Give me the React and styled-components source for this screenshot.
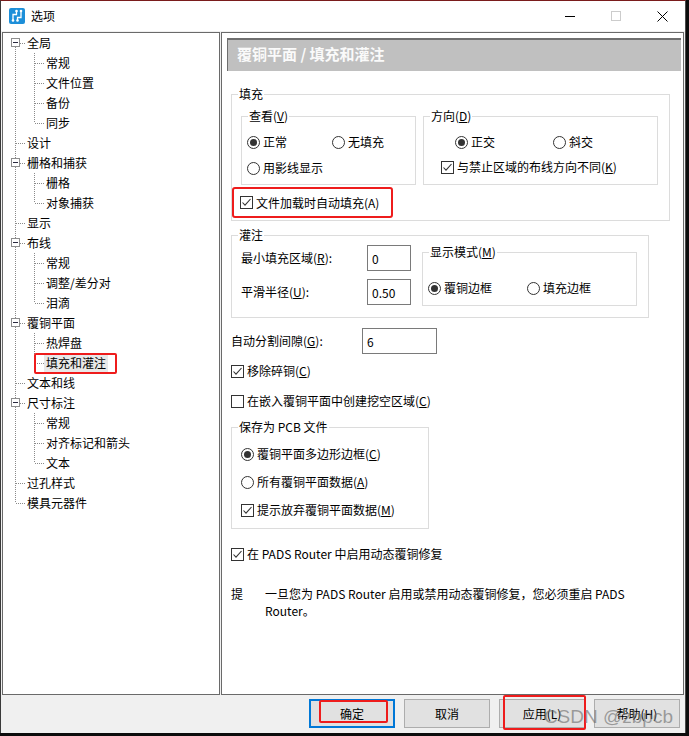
import React from "react";
import styled, { createGlobalStyle, css } from "styled-components";

const GlobalStyle = createGlobalStyle`
  body {
    margin: 0;
    background: #0c0c0c;
    font-family: "Noto Sans CJK SC", "Noto Sans", sans-serif;
  }
`;

const Screen = styled.div`
  display: flex;
  width: 689px;
  height: 736px;
  background: #0c0c0c;
  overflow: hidden;
`;

const Window = styled.div`
  position: relative;
  width: 686px;
  height: 733px;
  box-sizing: border-box;
  display: flex;
  flex-direction: column;
  background: #f0f0f0;
  border-top: 1px solid #7a1c1c;
  border-left: 1px solid #3a3a3a;
  border-right: 1px solid #4a4a4a;
  color: #000;
  font-size: 12px;
`;

const TitleBar = styled.div`
  height: 30px;
  flex: none;
  display: flex;
  align-items: center;
  background: #fff;
`;

const Title = styled.span`
  margin-left: 6px;
  font-size: 12px;
  line-height: 16px;
`;

const WinButtons = styled.div`
  margin-left: auto;
  display: flex;
`;

const WinButton = styled.div`
  width: 46px;
  height: 30px;
  display: flex;
  align-items: center;
  justify-content: center;
`;

const Panels = styled.div`
  display: flex;
  gap: 1px;
  padding: 1px 1px 0 1px;
  flex: none;
`;

const TreePanel = styled.div`
  width: 218px;
  height: 663px;
  box-sizing: border-box;
  background: #fff;
  border: 1px solid #6a6a6a;
`;

const TreeRow = styled.div`
  height: 20px;
  display: flex;
  align-items: center;
`;

const TreeLabel = styled.span`
  position: relative;
  padding: 0 2px 1px;
  line-height: 16px;
  white-space: nowrap;
  ${(p) =>
    p.$selected &&
    css`
      background: #e8e8e8;
      &::after {
        content: "";
        position: absolute;
        top: -2px;
        bottom: -2px;
        left: -10px;
        right: -9px;
        border: 2px solid #ee1c1c;
        border-radius: 2px;
      }
    `}
`;

const SettingsPanel = styled.div`
  width: 463px;
  height: 663px;
  box-sizing: border-box;
  background: #fff;
  border: 1px solid #6a6a6a;
  padding: 5px 2px 0 5px;
`;

const Header = styled.div`
  height: 33px;
  box-sizing: border-box;
  background: #c0c0c0;
  border-top: 2px solid #6e6e6e;
  border-left: 1px solid #6e6e6e;
  padding-left: 9px;
  color: #fafafa;
  font-size: 15px;
  font-weight: bold;
  line-height: 28px;
`;

const Content = styled.div`
  padding-left: 4px;
  display: flex;
  flex-direction: column;
  align-items: flex-start;
`;

const Group = styled.div`
  position: relative;
  box-sizing: border-box;
  border: 1px solid #dcdcdc;
  width: ${(p) => p.$w}px;
  height: ${(p) => p.$h}px;
  margin-top: ${(p) => p.$mt || 0}px;
  margin-left: ${(p) => p.$ml || 0}px;
  padding: ${(p) => p.$pad || "0"};
  flex: none;
`;

const Legend = styled.span`
  position: absolute;
  top: -9px;
  left: 6px;
  padding: 0 1px;
  background: #fff;
  line-height: 16px;
  white-space: nowrap;
`;

const GroupRow = styled.div`
  display: flex;
  gap: 7px;
  margin-left: 9px;
`;

const Row = styled.div`
  display: flex;
  align-items: center;
  height: ${(p) => p.$h || 20}px;
  margin-top: ${(p) => p.$mt || 0}px;
  padding-left: ${(p) => p.$pl || 0}px;
`;

const Option = styled.div`
  display: flex;
  align-items: center;
  gap: 3px;
  flex: none;
  width: ${(p) => (p.$w ? `${p.$w}px` : "auto")};
  line-height: 16px;
  white-space: nowrap;
`;

const RadioDot = styled.span`
  position: relative;
  width: 13px;
  height: 13px;
  box-sizing: border-box;
  border: 1px solid #333;
  border-radius: 50%;
  background: #fff;
  flex: none;
  ${(p) =>
    p.$on &&
    css`
      &::after {
        content: "";
        position: absolute;
        left: 2px;
        top: 2px;
        width: 7px;
        height: 7px;
        border-radius: 50%;
        background: #333;
      }
    `}
`;

const CheckBox = styled.span`
  width: 13px;
  height: 13px;
  box-sizing: border-box;
  border: 1px solid #333;
  background: #fff;
  flex: none;
  display: flex;
  svg {
    display: block;
  }
`;

const AutoFillMark = styled.div`
  display: flex;
  align-items: center;
  box-sizing: border-box;
  width: 161px;
  height: 31px;
  margin-top: 2px;
  padding-left: 6px;
  border: 2px solid #ee1c1c;
  border-radius: 3px;
`;

const PourBody = styled.div`
  display: flex;
  align-items: flex-start;
`;

const FieldCol = styled.div`
  display: flex;
  flex-direction: column;
  gap: 8px;
`;

const Field = styled.div`
  display: flex;
  align-items: center;
  margin-top: ${(p) => p.$mt || 0}px;
`;

const FieldLabel = styled.span`
  width: ${(p) => p.$w}px;
  line-height: 16px;
`;

const Input = styled.input`
  width: ${(p) => p.$w}px;
  height: 26px;
  box-sizing: border-box;
  border: 1px solid #7a7a7a;
  padding: 0 4px;
  margin: 0;
  font: inherit;
  font-size: 12px;
  color: #000;
  background: #fff;
  outline: none;
`;

const Note = styled.div`
  display: flex;
  margin-top: 21px;
  line-height: 17px;
`;

const NoteTag = styled.span`
  width: 34px;
  flex: none;
`;

const ButtonBar = styled.div`
  display: flex;
  justify-content: flex-end;
  gap: 9px;
  padding: 4px 5px 0 0;
`;

const Button = styled.div`
  position: relative;
  width: 86px;
  height: 29px;
  box-sizing: border-box;
  display: flex;
  align-items: center;
  justify-content: center;
  background: #e1e1e1;
  border: ${(p) => (p.$default ? "2px solid #0078d7" : "1px solid #adadad")};
  font-size: 12px;
  ${(p) =>
    p.$mark === "inner" &&
    css`
      &::after {
        content: "";
        position: absolute;
        top: -1px;
        left: 8px;
        right: 5px;
        bottom: 3px;
        border: 2px solid #ee1c1c;
        border-radius: 2px;
      }
    `}
  ${(p) =>
    p.$mark === "outer" &&
    css`
      &::after {
        content: "";
        position: absolute;
        top: -5px;
        left: 3px;
        right: -2px;
        bottom: -3px;
        border: 2px solid #ee1c1c;
        border-radius: 2px;
      }
    `}
`;

const Watermark = styled.div`
  position: absolute;
  right: 12px;
  bottom: 5px;
  font-family: "Liberation Sans", Arial, sans-serif;
  font-size: 19px;
  line-height: 22px;
  color: rgba(105, 105, 105, 0.6);
  pointer-events: none;
`;

const tree = [
  { label: "全局", children: ["常规", "文件位置", "备份", "同步"] },
  { label: "设计" },
  { label: "栅格和捕获", children: ["栅格", "对象捕获"] },
  { label: "显示" },
  { label: "布线", children: ["常规", "调整/差分对", "泪滴"] },
  { label: "覆铜平面", children: ["热焊盘", "填充和灌注"] },
  { label: "文本和线" },
  { label: "尺寸标注", children: ["常规", "对齐标记和箭头", "文本"] },
  { label: "过孔样式" },
  { label: "模具元器件" },
];

const rows = [];
tree.forEach((n, i) => {
  rows.push({ label: n.label, level: 1, box: !!n.children, first: i === 0, last: i === tree.length - 1 });
  (n.children || []).forEach((c, j) =>
    rows.push({ label: c, level: 2, lastChild: j === n.children.length - 1, selected: c === "填充和灌注" })
  );
});

const dot = { stroke: "#8a8a8a", strokeDasharray: "1 1", strokeWidth: 1 };

const Connector = ({ row }) => {
  if (row.level === 1) {
    return (
      <svg width="22" height="20">
        {row.box ? (
          <>
            {!row.first && <line x1="12.5" y1="0" x2="12.5" y2="5" {...dot} />}
            {!row.last && <line x1="12.5" y1="14" x2="12.5" y2="20" {...dot} />}
            <rect x="8.5" y="5.5" width="8" height="8" fill="#fff" stroke="#8e8e8e" />
            <line x1="10" y1="9.5" x2="15" y2="9.5" stroke="#2a2a40" />
            <line x1="17" y1="10.5" x2="22" y2="10.5" {...dot} />
          </>
        ) : (
          <>
            <line x1="12.5" y1="0" x2="12.5" y2={row.last ? 10 : 20} {...dot} />
            <line x1="13" y1="10.5" x2="22" y2="10.5" {...dot} />
          </>
        )}
      </svg>
    );
  }
  return (
    <svg width="41" height="20">
      <line x1="12.5" y1="0" x2="12.5" y2="20" {...dot} />
      <line x1="31.5" y1="0" x2="31.5" y2={row.lastChild ? 10 : 20} {...dot} />
      <line x1="32" y1="10.5" x2="41" y2="10.5" {...dot} />
    </svg>
  );
};

const Radio = ({ on, w, children }) => (
  <Option $w={w}>
    <RadioDot $on={on} />
    <span>{children}</span>
  </Option>
);

const Check = ({ on, children }) => (
  <Option>
    <CheckBox>
      {on && (
        <svg width="11" height="11" viewBox="0 0 11 11">
          <polyline points="1.5,5.5 4,8.2 9.5,2" fill="none" stroke="#333" strokeWidth="1.1" />
        </svg>
      )}
    </CheckBox>
    <span>{children}</span>
  </Option>
);

const AppIcon = () => (
  <svg width="16" height="16" viewBox="0 0 16 16" style={{ marginLeft: 8 }}>
    <rect width="16" height="16" rx="2" fill="#1d8fd9" />
    <path d="M4 12.5 V6.5 H7.5 V3" fill="none" stroke="#fff" strokeWidth="1.3" />
    <path d="M12 3 V9.5 H8.5 V12.5" fill="none" stroke="#fff" strokeWidth="1.3" />
    <circle cx="4" cy="12.5" r="1.3" fill="#fff" />
    <circle cx="7.5" cy="3" r="1.3" fill="#fff" />
    <circle cx="12" cy="3" r="1.3" fill="#fff" />
    <circle cx="8.5" cy="12.5" r="1.3" fill="#fff" />
  </svg>
);

const App = () => {
  return (
    <Screen>
      <GlobalStyle />
      <Window>
        <TitleBar>
          <AppIcon />
          <Title>选项</Title>
          <WinButtons>
            <WinButton>
              <svg width="10" height="10">
                <line x1="0" y1="5.5" x2="10" y2="5.5" stroke="#000" />
              </svg>
            </WinButton>
            <WinButton>
              <svg width="10" height="10">
                <rect x="0.5" y="0.5" width="9" height="9" fill="none" stroke="#cccccc" />
              </svg>
            </WinButton>
            <WinButton>
              <svg width="11" height="11">
                <path d="M0.5 0.5 L10.5 10.5 M10.5 0.5 L0.5 10.5" stroke="#000" strokeWidth="1" />
              </svg>
            </WinButton>
          </WinButtons>
        </TitleBar>

        <Panels>
          <TreePanel>
            {rows.map((r, i) => (
              <TreeRow key={i}>
                <Connector row={r} />
                <TreeLabel $selected={r.selected}>{r.label}</TreeLabel>
              </TreeRow>
            ))}
          </TreePanel>

          <SettingsPanel>
            <Header>覆铜平面 / 填充和灌注</Header>
            <Content>
              <Group $w={439} $h={127} $mt={23} $pad="21px 0 0 0">
                <Legend>填充</Legend>
                <GroupRow>
                  <Group $w={175} $h={69} $pad="12px 0 0 5px">
                    <Legend>
                      查看(<u>V</u>)
                    </Legend>
                    <Row $h={26}>
                      <Radio on w={85}>正常</Radio>
                      <Radio>无填充</Radio>
                    </Row>
                    <Row $h={26}>
                      <Radio>用影线显示</Radio>
                    </Row>
                  </Group>
                  <Group $w={235} $h={69} $pad="12px 0 0 17px">
                    <Legend>
                      方向(<u>D</u>)
                    </Legend>
                    <Row $h={26} $pl={14}>
                      <Radio on w={98}>正交</Radio>
                      <Radio>斜交</Radio>
                    </Row>
                    <Row $h={24}>
                      <Check on>
                        与禁止区域的布线方向不同(<u>K</u>)
                      </Check>
                    </Row>
                  </Group>
                </GroupRow>
                <AutoFillMark>
                  <Check on>文件加载时自动填充(A)</Check>
                </AutoFillMark>
              </Group>

              <Group $w={418} $h={83} $mt={14} $pad="9px 0 0 9px">
                <Legend>灌注</Legend>
                <PourBody>
                  <FieldCol>
                    <Field>
                      <FieldLabel $w={126}>
                        最小填充区域(<u>R</u>):
                      </FieldLabel>
                      <Input $w={44} readOnly value="0" />
                    </Field>
                    <Field>
                      <FieldLabel $w={126}>
                        平滑半径(<u>U</u>):
                      </FieldLabel>
                      <Input $w={44} readOnly value="0.50" />
                    </Field>
                  </FieldCol>
                  <Group $w={215} $h={54} $mt={7} $ml={11} $pad="22px 0 0 5px">
                    <Legend>
                      显示模式(<u>M</u>)
                    </Legend>
                    <Row $h={26}>
                      <Radio on w={99}>覆铜边框</Radio>
                      <Radio>填充边框</Radio>
                    </Row>
                  </Group>
                </PourBody>
              </Group>

              <Field $mt={10}>
                <FieldLabel $w={131}>
                  自动分割间隙(<u>G</u>):
                </FieldLabel>
                <Input $w={75} readOnly value="6" />
              </Field>

              <Row $mt={7}>
                <Check on>
                  移除碎铜(<u>C</u>)
                </Check>
              </Row>
              <Row $mt={10}>
                <Check>
                  在嵌入覆铜平面中创建挖空区域(<u>C</u>)
                </Check>
              </Row>

              <Group $w={198} $h={102} $mt={16} $pad="12px 0 0 9px">
                <Legend>保存为 PCB 文件</Legend>
                <Row $h={28}>
                  <Radio on>
                    覆铜平面多边形边框(<u>C</u>)
                  </Radio>
                </Row>
                <Row $h={28}>
                  <Radio>
                    所有覆铜平面数据(<u>A</u>)
                  </Radio>
                </Row>
                <Row $h={28}>
                  <Check on>
                    提示放弃覆铜平面数据(<u>M</u>)
                  </Check>
                </Row>
              </Group>

              <Row $mt={15}>
                <Check on>在 PADS Router 中启用动态覆铜修复</Check>
              </Row>

              <Note>
                <NoteTag>提</NoteTag>
                <span>
                  一旦您为 PADS Router 启用或禁用动态覆铜修复，您必须重启 PADS
                  <br />
                  Router。
                </span>
              </Note>
            </Content>
          </SettingsPanel>
        </Panels>

        <ButtonBar>
          <Button $default $mark="inner">确定</Button>
          <Button>取消</Button>
          <Button $mark="outer">应用(L)</Button>
          <Button>帮助(H)</Button>
        </ButtonBar>
        <Watermark>CSDN @zbpcb</Watermark>
      </Window>
    </Screen>
  );
};

export default App;
